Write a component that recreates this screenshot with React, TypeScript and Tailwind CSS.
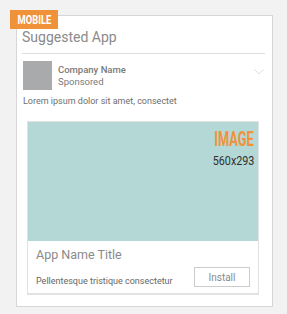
export default function App() {
  return (
    <div className="relative h-[314px] w-[287px] bg-[#f2f2f2] pl-[16px] pt-[15px] font-['Roboto',sans-serif]">
      <div className="h-[292px] w-[257px] border border-[#d6d6d6] bg-white pl-[5px] pr-[7px]">
        <h2 className="mt-[11px] text-[14px] leading-[20px] text-[#8a8a8a]">Suggested App</h2>
        <div className="mt-[6px] h-px bg-[#dedede]" />

        <div className="mt-[7px] flex items-start pl-px">
          <div className="h-[29px] w-[29px] bg-[#a9aaac]" />
          <div className="ml-[6px] flex-1 pt-[3px]">
            <p className="text-[9.5px] font-medium leading-[12px] text-[#7a7a7a]">Company Name</p>
            <p className="text-[9.5px] leading-[12px] text-[#7a7a7a]">Sponsored</p>
          </div>
          <svg width="10" height="6" viewBox="0 0 10 6" className="mr-px mt-[8px]">
            <path d="M0.5 0.5 L5 5 L9.5 0.5" fill="none" stroke="#dcdcdc" strokeWidth="1" />
          </svg>
        </div>

        <p className="mt-[5px] pl-px text-[9px] leading-[12px] text-[#6e6e6e]">
          Lorem ipsum dolor sit amet, consectet
        </p>

        <div className="ml-[5px] mt-[14px] w-[232px] border border-b-2 border-[#e2e2e2] bg-white">
          <div className="flex h-[119px] flex-col items-end bg-[#b4d8d5] pr-[4px] pt-[6px]">
            <span className="inline-block origin-right scale-x-[0.64] text-[20px] font-bold leading-[22px] text-[#f0923a]">IMAGE</span>
            <span className="mt-[4px] inline-block origin-right scale-x-[0.86] text-[12.5px] leading-[14px] text-[#2f2f2f]">560x293</span>
          </div>
          <div className="px-[8px] pb-[6px] pt-[5px]">
            <p className="text-[12.5px] leading-[18px] text-[#8a8a8a]">App Name Title</p>
            <div className="mt-[3px] flex items-end justify-between">
              <span className="text-[9px] leading-[12px] text-[#666]">Pellentesque tristique consectetur</span>
              <button className="h-[20px] w-[56px] border border-[#cccccc] text-[10px] text-[#8a8a8a]">Install</button>
            </div>
          </div>
        </div>
      </div>

      <div className="absolute left-[10px] top-[10px] flex h-[19px] w-[48px] items-center justify-center bg-[#f0923a]">
        <span className="inline-block scale-x-[0.72] text-[13px] font-bold leading-[14px] text-white">MOBILE</span>
      </div>
    </div>
  );
}
